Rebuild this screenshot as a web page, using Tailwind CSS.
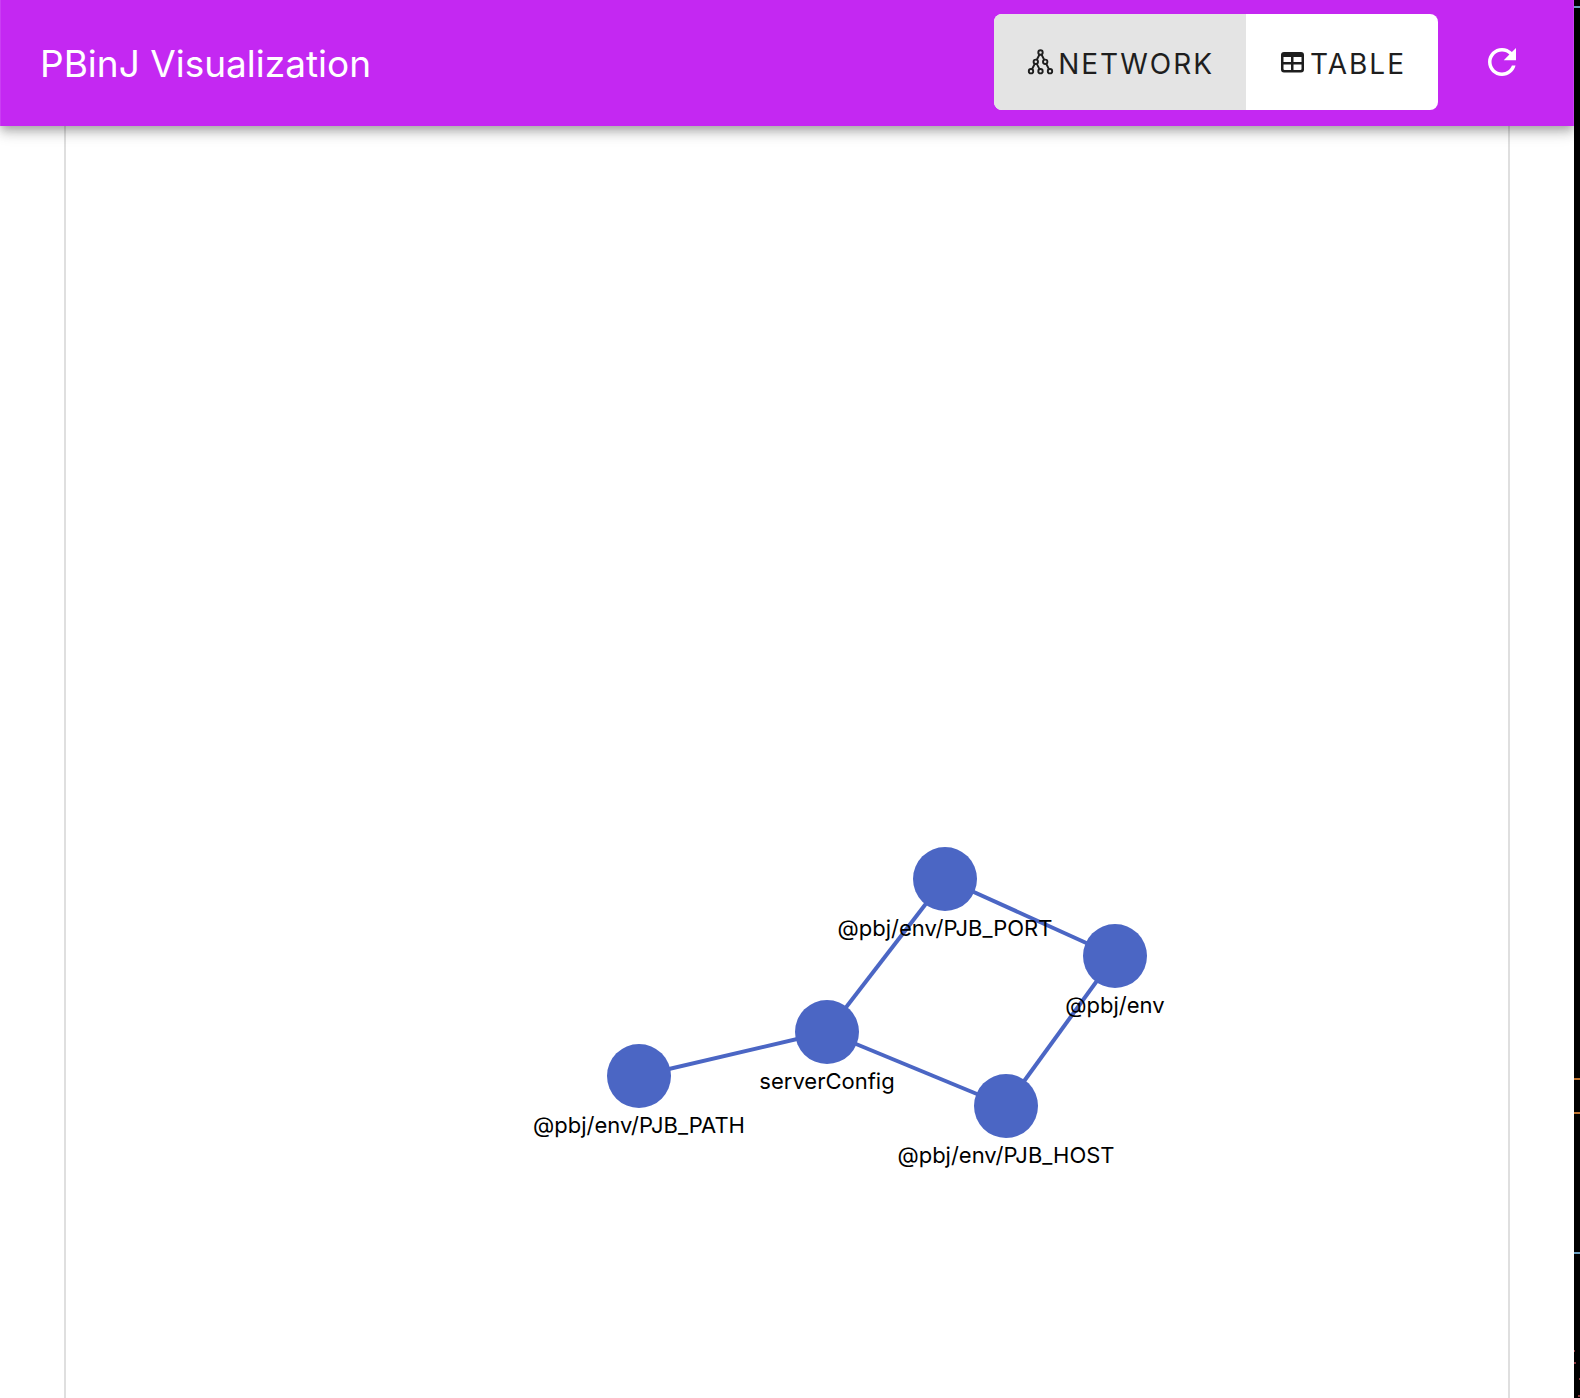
<!DOCTYPE html>
<html lang="en">
<head>
<meta charset="utf-8">
<meta name="viewport" content="width=device-width, initial-scale=1">
<title>PBinJ Visualization</title>
<script src="https://cdn.jsdelivr.net/npm/@tailwindcss/browser@4"></script>
</head>
<body class="flex min-h-screen bg-white font-['Inter',sans-serif]">
  <div class="flex min-w-0 flex-1 flex-col overflow-x-clip">
    <header class="z-10 flex items-center border-x border-white/10 bg-[#c428f2] pt-3.5 pr-[50px] pb-4 pl-[39px] shadow-[0_4px_8px_-2px_rgba(0,0,0,0.2),0_8px_10px_0_rgba(0,0,0,0.14),0_2px_20px_0_rgba(0,0,0,0.12)]">
      <h1 class="flex-1 pt-1 text-[37px] leading-12 font-normal text-white">PBinJ Visualization</h1>
      <div role="group" aria-label="View" class="flex h-24 overflow-hidden rounded-lg bg-white text-[28px] tracking-[2px] text-[#1e1e1e]">
        <button type="button" aria-pressed="true" class="flex items-center gap-1 bg-[#e4e4e4] px-8 pt-1">
          <svg class="mb-1 size-7" viewBox="0 0 28 28" fill="none" stroke="currentColor" stroke-width="1.9" aria-hidden="true">
            <circle cx="14.500" cy="4.500" r="2.200"/><circle cx="9.800" cy="13.800" r="2.200"/><circle cx="19.200" cy="13.800" r="2.200"/>
            <circle cx="5" cy="23.200" r="2.200"/><circle cx="14.500" cy="23.200" r="2.200"/><circle cx="24" cy="23.200" r="2.200"/>
            <path d="M13.500 6.500l-2.700 5.300M15.500 6.500l2.700 5.300M8.800 15.800l-2.800 5.400M10.800 15.800l2.700 5.400M20.200 15.800l2.800 5.400"/>
          </svg>
          NETWORK
        </button>
        <button type="button" aria-pressed="false" class="flex items-center gap-1 px-8 pt-1">
          <svg class="mb-1 size-7" viewBox="0 0 28 28" aria-hidden="true">
            <path fill="currentColor" fill-rule="evenodd" d="M6 4h17a3 3 0 0 1 3 3v14.500a3 3 0 0 1-3 3H6a3 3 0 0 1-3-3V7a3 3 0 0 1 3-3zM5.500 9v5h7.500V9zM15.500 9v5H23.500V9zM5.500 16.500v4.500q0 1 1 1h6.500V16.500zM15.500 16.500v5.500H22.500q1 0 1-1V16.500z"/>
          </svg>
          TABLE
        </button>
      </div>
      <button type="button" aria-label="Refresh" class="ml-[43px] text-white">
        <svg class="size-[42px]" viewBox="0 0 24 24" fill="currentColor" aria-hidden="true"><path d="M17.65 6.35C16.200 4.900 14.210 4 12 4c-4.420 0-7.990 3.580-7.990 8s3.570 8 7.990 8c3.730 0 6.840-2.550 7.730-6h-2.080c-.820 2.330-3.040 4-5.650 4-3.310 0-6-2.690-6-6s2.690-6 6-6c1.660 0 3.140.690 4.220 1.780L13 11h7V4l-2.350 2.350z"/></svg>
      </button>
    </header>
    <main class="mx-16 flex flex-1 border-x-2 border-[#dfdfdf]">
      <svg class="min-h-[1200px] w-full flex-1" role="img" aria-label="Dependency network">
        <g stroke="#4b66c4" stroke-width="4">
          <line x1="573" y1="950" x2="761" y2="906"/>
          <line x1="761" y1="906" x2="879" y2="753"/>
          <line x1="761" y1="906" x2="940" y2="980"/>
          <line x1="879" y1="753" x2="1049" y2="830"/>
          <line x1="1049" y1="830" x2="940" y2="980"/>
        </g>
        <g fill="#4b66c4">
          <circle cx="573" cy="950" r="32"/>
          <circle cx="761" cy="906" r="32"/>
          <circle cx="879" cy="753" r="32"/>
          <circle cx="1049" cy="830" r="32"/>
          <circle cx="940" cy="980" r="32"/>
        </g>
        <g class="text-[22px]" fill="#000" text-anchor="middle">
          <text x="573" y="1007">@pbj/env/PJB_PATH</text>
          <text x="761" y="963">serverConfig</text>
          <text x="879" y="810">@pbj/env/PJB_PORT</text>
          <text x="1049" y="887">@pbj/env</text>
          <text x="940" y="1037">@pbj/env/PJB_HOST</text>
        </g>
      </svg>
    </main>
  </div>
  <aside class="flex w-1.5 flex-none bg-black" aria-hidden="true">
    <svg class="w-full flex-1">
      <path stroke="#6a9fc0" stroke-width="2" d="M0 7h6M0 1253h6"/>
      <path stroke="#bd7430" stroke-width="2" d="M0 1079h6M0 1113h6"/>
      <path stroke="#8c3a40" stroke-width="2" d="M0 1351h1M0 1363h2M5 1379h1M4 1396h2"/>
    </svg>
  </aside>
</body>
</html>
